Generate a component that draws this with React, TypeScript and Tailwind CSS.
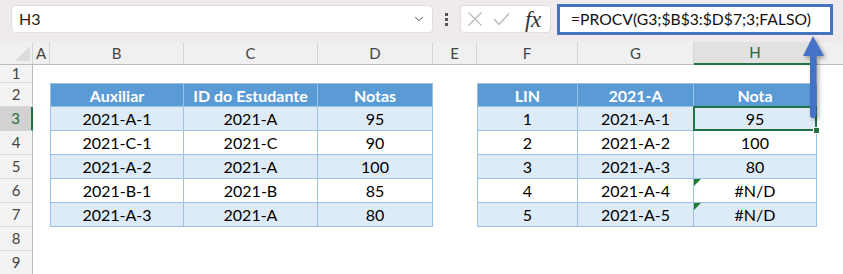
import { ChevronDown } from 'lucide-react'

const COLS = 'grid grid-cols-[33px_17px_134px_134px_115px_44px_101px_116px_123px_1fr]'

const leftTable = [
  ['2021-A-1', '2021-A', '95'],
  ['2021-C-1', '2021-C', '90'],
  ['2021-A-2', '2021-A', '100'],
  ['2021-B-1', '2021-B', '85'],
  ['2021-A-3', '2021-A', '80'],
]

const rightTable = [
  ['1', '2021-A-1', '95'],
  ['2', '2021-A-2', '100'],
  ['3', '2021-A-3', '80'],
  ['4', '2021-A-4', '#N/D'],
  ['5', '2021-A-5', '#N/D'],
]

function RowHead({ n, active }: { n: number; active?: boolean }) {
  return (
    <div
      className={
        active
          ? 'flex items-center justify-center bg-[#d2d2d2] text-[#1e6b3f] border-r-2 border-r-[#217346] border-b border-b-[#d4d4d4]'
          : 'flex items-center justify-center bg-[#f3f3f3] text-[#444] border-r border-r-[#bcbcbc] border-b border-b-[#dadada]'
      }
    >
      {n}
    </div>
  )
}

function HeadCell({ text, first }: { text: string; first?: boolean }) {
  return (
    <div
      className={`flex items-center justify-center bg-[#5b9bd5] text-white font-bold border-t border-r border-[#9bc2e6] ${first ? 'border-l' : ''}`}
    >
      {text}
    </div>
  )
}

function DataCell({
  text,
  band,
  first,
  children,
}: {
  text: string
  band: boolean
  first?: boolean
  children?: React.ReactNode
}) {
  return (
    <div
      className={`relative flex items-center justify-center text-black border-b border-r border-t border-[#9bc2e6] -mt-px ${band ? 'bg-[#ddebf7]' : 'bg-white'} ${first ? 'border-l' : ''}`}
    >
      {text}
      {children}
    </div>
  )
}

function ErrorFlag() {
  return (
    <svg className="absolute left-0 top-0" width="7" height="7" viewBox="0 0 7 7">
      <polygon points="0,0 7,0 0,7" fill="#1f7a32" />
    </svg>
  )
}

function Selection() {
  return (
    <>
      <div className="absolute z-10 -left-px -top-px -right-px -bottom-px border-2 border-[#217346] pointer-events-none" />
      <div className="absolute z-20 -right-[4px] -bottom-[4px] w-[7px] h-[7px] bg-[#217346] border border-white" />
    </>
  )
}

export default function App() {
  return (
    <div
      className="relative w-[843px] h-[274px] overflow-hidden bg-white text-[16px] leading-none"
      style={{ fontFamily: 'Lato, "Liberation Sans", sans-serif' }}
    >
      {/* formula bar */}
      <div className="h-[42px] bg-[#eeeaed] flex items-start pt-[5px] pl-[11px]">
        <div className="w-[422px] h-[28px] bg-white rounded-[4px] border border-[#e2dde0] flex items-center pl-[7px] pr-[6px] text-[#222]">
          <span className="flex-1">H3</span>
          <ChevronDown className="w-[14px] h-[14px] text-[#444]" strokeWidth={1.6} />
        </div>
        <div className="w-[27px] h-[28px] flex flex-col items-center justify-center gap-[2px]">
          <span className="w-[3px] h-[3px] bg-[#555]" />
          <span className="w-[3px] h-[3px] bg-[#555]" />
          <span className="w-[3px] h-[3px] bg-[#555]" />
        </div>
        <div className="w-[91px] h-[28px] bg-white rounded-[4px] border border-[#e2dde0] flex items-center pl-[6px] gap-[10px]">
          <svg width="16" height="16" viewBox="0 0 16 16">
            <path d="M1.5 1.5 L14.5 14.5 M14.5 1.5 L1.5 14.5" stroke="#b9b9b9" strokeWidth="1.3" fill="none" />
          </svg>
          <svg width="17" height="14" viewBox="0 0 17 14">
            <path d="M1 7 L6 12.5 L16 1.5" stroke="#b9b9b9" strokeWidth="1.3" fill="none" />
          </svg>
          <span
            className="ml-[5px] text-[23px] italic text-[#333] tracking-[-0.5px]"
            style={{ fontFamily: '"Liberation Serif", serif' }}
          >
            fx
          </span>
        </div>
        <div className="ml-[6px] -mt-[1px] w-[276px] h-[31px] border-[3px] border-[#4472c4] bg-white flex items-center pl-[11px] text-[#111] text-[15.7px]">
          =PROCV(G3;$B$3:$D$7;3;FALSO)
        </div>
      </div>

      {/* column headers */}
      <div className={`${COLS} h-[23px] bg-[#f0f0f0] border-b border-[#bcbcbc] text-[#444] text-[15px]`}>
        <div className="relative border-r border-[#d4d4d4]">
          <svg className="absolute right-[2px] bottom-[3px]" width="15" height="15" viewBox="0 0 15 15">
            <polygon points="15,0 15,15 0,15" fill="#dcdcdc" />
          </svg>
        </div>
        {['A', 'B', 'C', 'D', 'E', 'F', 'G'].map((c) => (
          <div key={c} className="flex items-center justify-center border-r border-[#d4d4d4]">
            {c}
          </div>
        ))}
        <div className="flex items-center justify-center bg-[#e1e1e1] text-[#1e6b3f] border-r border-[#d4d4d4] border-b-2 border-b-[#217346] -mb-px">
          H
        </div>
        <div />
      </div>

      {/* row 1 */}
      <div className={`${COLS} h-[18px] text-[15px]`}>
        <RowHead n={1} />
      </div>

      {/* row 2 headers */}
      <div className={`${COLS} h-[24px]`}>
        <div className="text-[15px] grid">
          <RowHead n={2} />
        </div>
        <div />
        <HeadCell text="Auxiliar" first />
        <HeadCell text="ID do Estudante" />
        <HeadCell text="Notas" />
        <div />
        <HeadCell text="LIN" first />
        <HeadCell text="2021-A" />
        <HeadCell text="Nota" />
        <div />
      </div>

      {/* data rows */}
      {leftTable.map((row, i) => {
        const band = i % 2 === 0
        const right = rightTable[i]
        return (
          <div key={i} className={`${COLS} h-[24px] ${i === 0 ? 'relative z-10' : ''}`}>
            <div className="text-[15px] grid">
              <RowHead n={i + 3} active={i === 0} />
            </div>
            <div />
            <DataCell text={row[0]} band={band} first />
            <DataCell text={row[1]} band={band} />
            <DataCell text={row[2]} band={band} />
            <div />
            <DataCell text={right[0]} band={band} first />
            <DataCell text={right[1]} band={band} />
            <DataCell text={right[2]} band={band}>
              {i === 0 && <Selection />}
              {i >= 3 && <ErrorFlag />}
            </DataCell>
            <div />
          </div>
        )
      })}

      {/* rows 8-9 */}
      {[8, 9].map((n) => (
        <div key={n} className={`${COLS} h-[24px] text-[15px]`}>
          <RowHead n={n} />
        </div>
      ))}

      {/* arrow pointing at the formula */}
      <svg
        className="absolute z-30 left-[800px] top-[34px] drop-shadow-[2px_2px_2px_rgba(0,0,0,0.35)]"
        width="28"
        height="88"
        viewBox="0 0 28 88"
      >
        <rect x="10" y="18" width="6.5" height="66" rx="3.2" fill="#4472c4" />
        <polygon points="13,2 24,22 3,22" fill="#4472c4" />
      </svg>
    </div>
  )
}
